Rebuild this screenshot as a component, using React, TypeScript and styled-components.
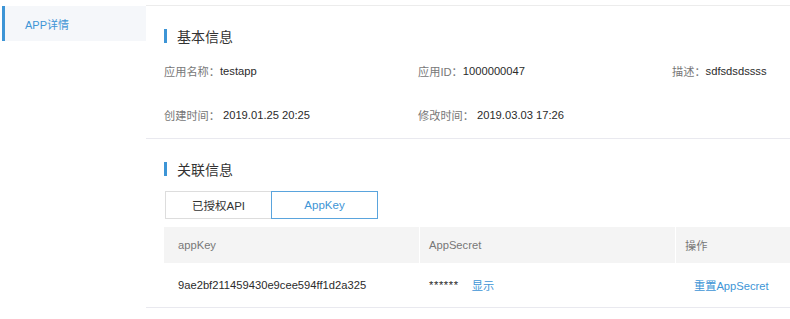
import React from 'react';
import styled, { createGlobalStyle } from 'styled-components';

const GlobalStyle = createGlobalStyle`
  html, body {
    margin: 0;
    padding: 0;
    background: #ffffff;
    font-family: "Liberation Sans", "Noto Sans CJK SC", sans-serif;
    color: #333333;
  }
`;

const Page = styled.div`
  display: flex;
  width: 790px;
  height: 319px;
  overflow: hidden;
`;

const Sidebar = styled.div`
  width: 144px;
  padding: 6px 0 0 2px;
  flex-shrink: 0;
`;

const NavItem = styled.div<{ $active?: boolean }>`
  height: 35px;
  display: flex;
  align-items: center;
  padding-left: 20px;
  font-size: 11px;
  color: ${p => (p.$active ? '#3d95d6' : '#555555')};
  background: ${p => (p.$active ? '#f5f7fa' : 'transparent')};
  border-left: 3px solid ${p => (p.$active ? '#3d95d6' : 'transparent')};
`;

const Main = styled.div`
  flex: 1;
  margin-top: 5px;
  border-top: 1px solid #ececec;
  display: flex;
  flex-direction: column;
`;

const Section = styled.div`
  padding-left: 18px;
  border-bottom: 1px solid #e9e9ef;
`;

const Title = styled.div<{ $top: number }>`
  display: flex;
  align-items: center;
  gap: 10px;
  height: 20px;
  margin-top: ${p => p.$top}px;
  font-size: 14px;
  color: #333333;

  &::before {
    content: '';
    width: 3px;
    height: 14px;
    background: #3d95d6;
  }
`;

const InfoGrid = styled.div`
  display: grid;
  grid-template-columns: 254px 254px 1fr;
  grid-auto-rows: 44px;
  margin-top: 3px;
  margin-bottom: 1px;
`;

const Info = styled.div`
  display: flex;
  align-items: center;
  font-size: 11.2px;
  color: #2b2b2b;
  white-space: nowrap;
`;

const Label = styled.span<{ $gap?: number }>`
  color: #777777;
  margin-right: ${p => p.$gap ?? 0}px;
`;

const Tabs = styled.div`
  display: flex;
  margin-top: 12px;
  margin-left: 1px;
`;

const Tab = styled.div<{ $active?: boolean }>`
  width: 107px;
  height: 28px;
  box-sizing: border-box;
  display: flex;
  align-items: center;
  justify-content: center;
  font-size: 11.5px;
  color: ${p => (p.$active ? '#3d95d6' : '#333333')};
  border: 1px solid ${p => (p.$active ? '#5aa4dd' : '#dddddd')};
  margin-left: ${p => (p.$active ? '-1px' : '0')};
  position: relative;
  z-index: ${p => (p.$active ? 1 : 0)};
`;

const Table = styled.div`
  display: grid;
  grid-template-columns: 255px 255px 1fr;
  column-gap: 1px;
  margin-top: 8px;
`;

const HeadCell = styled.div<{ $pad?: number }>`
  height: 36px;
  display: flex;
  align-items: center;
  padding-left: ${p => p.$pad ?? 9}px;
  background: #f4f4f4;
  font-size: 11.2px;
  color: #777777;
`;

const Cell = styled.div<{ $pad?: number }>`
  height: 44px;
  display: flex;
  align-items: center;
  padding-left: ${p => p.$pad ?? 9}px;
  font-size: 11.2px;
  color: #2b2b2b;
`;

const Stars = styled.span`
  letter-spacing: 0.6px;
`;

const Link = styled.span<{ $gap?: number }>`
  color: #3d95d6;
  margin-left: ${p => p.$gap ?? 0}px;
  cursor: pointer;
`;

export default function App() {
  return (
    <>
      <GlobalStyle />
      <Page>
        <Sidebar>
          <NavItem $active>APP详情</NavItem>
        </Sidebar>
        <Main>
          <Section>
            <Title $top={20}>基本信息</Title>
            <InfoGrid>
              <Info><Label>应用名称：</Label>testapp</Info>
              <Info><Label>应用ID：</Label>1000000047</Info>
              <Info><Label>描述：</Label>sdfsdsdssss</Info>
              <Info><Label $gap={3}>创建时间：</Label>2019.01.25 20:25</Info>
              <Info><Label $gap={3}>修改时间：</Label>2019.03.03 17:26</Info>
            </InfoGrid>
          </Section>
          <Section>
            <Title $top={20}>关联信息</Title>
            <Tabs>
              <Tab>已授权API</Tab>
              <Tab $active>AppKey</Tab>
            </Tabs>
            <Table>
              <HeadCell $pad={14}>appKey</HeadCell>
              <HeadCell>AppSecret</HeadCell>
              <HeadCell>操作</HeadCell>
              <Cell $pad={14}>9ae2bf211459430e9cee594ff1d2a325</Cell>
              <Cell><Stars>******</Stars><Link $gap={13}>显示</Link></Cell>
              <Cell $pad={18}><Link>重置AppSecret</Link></Cell>
            </Table>
          </Section>
        </Main>
      </Page>
    </>
  );
}
